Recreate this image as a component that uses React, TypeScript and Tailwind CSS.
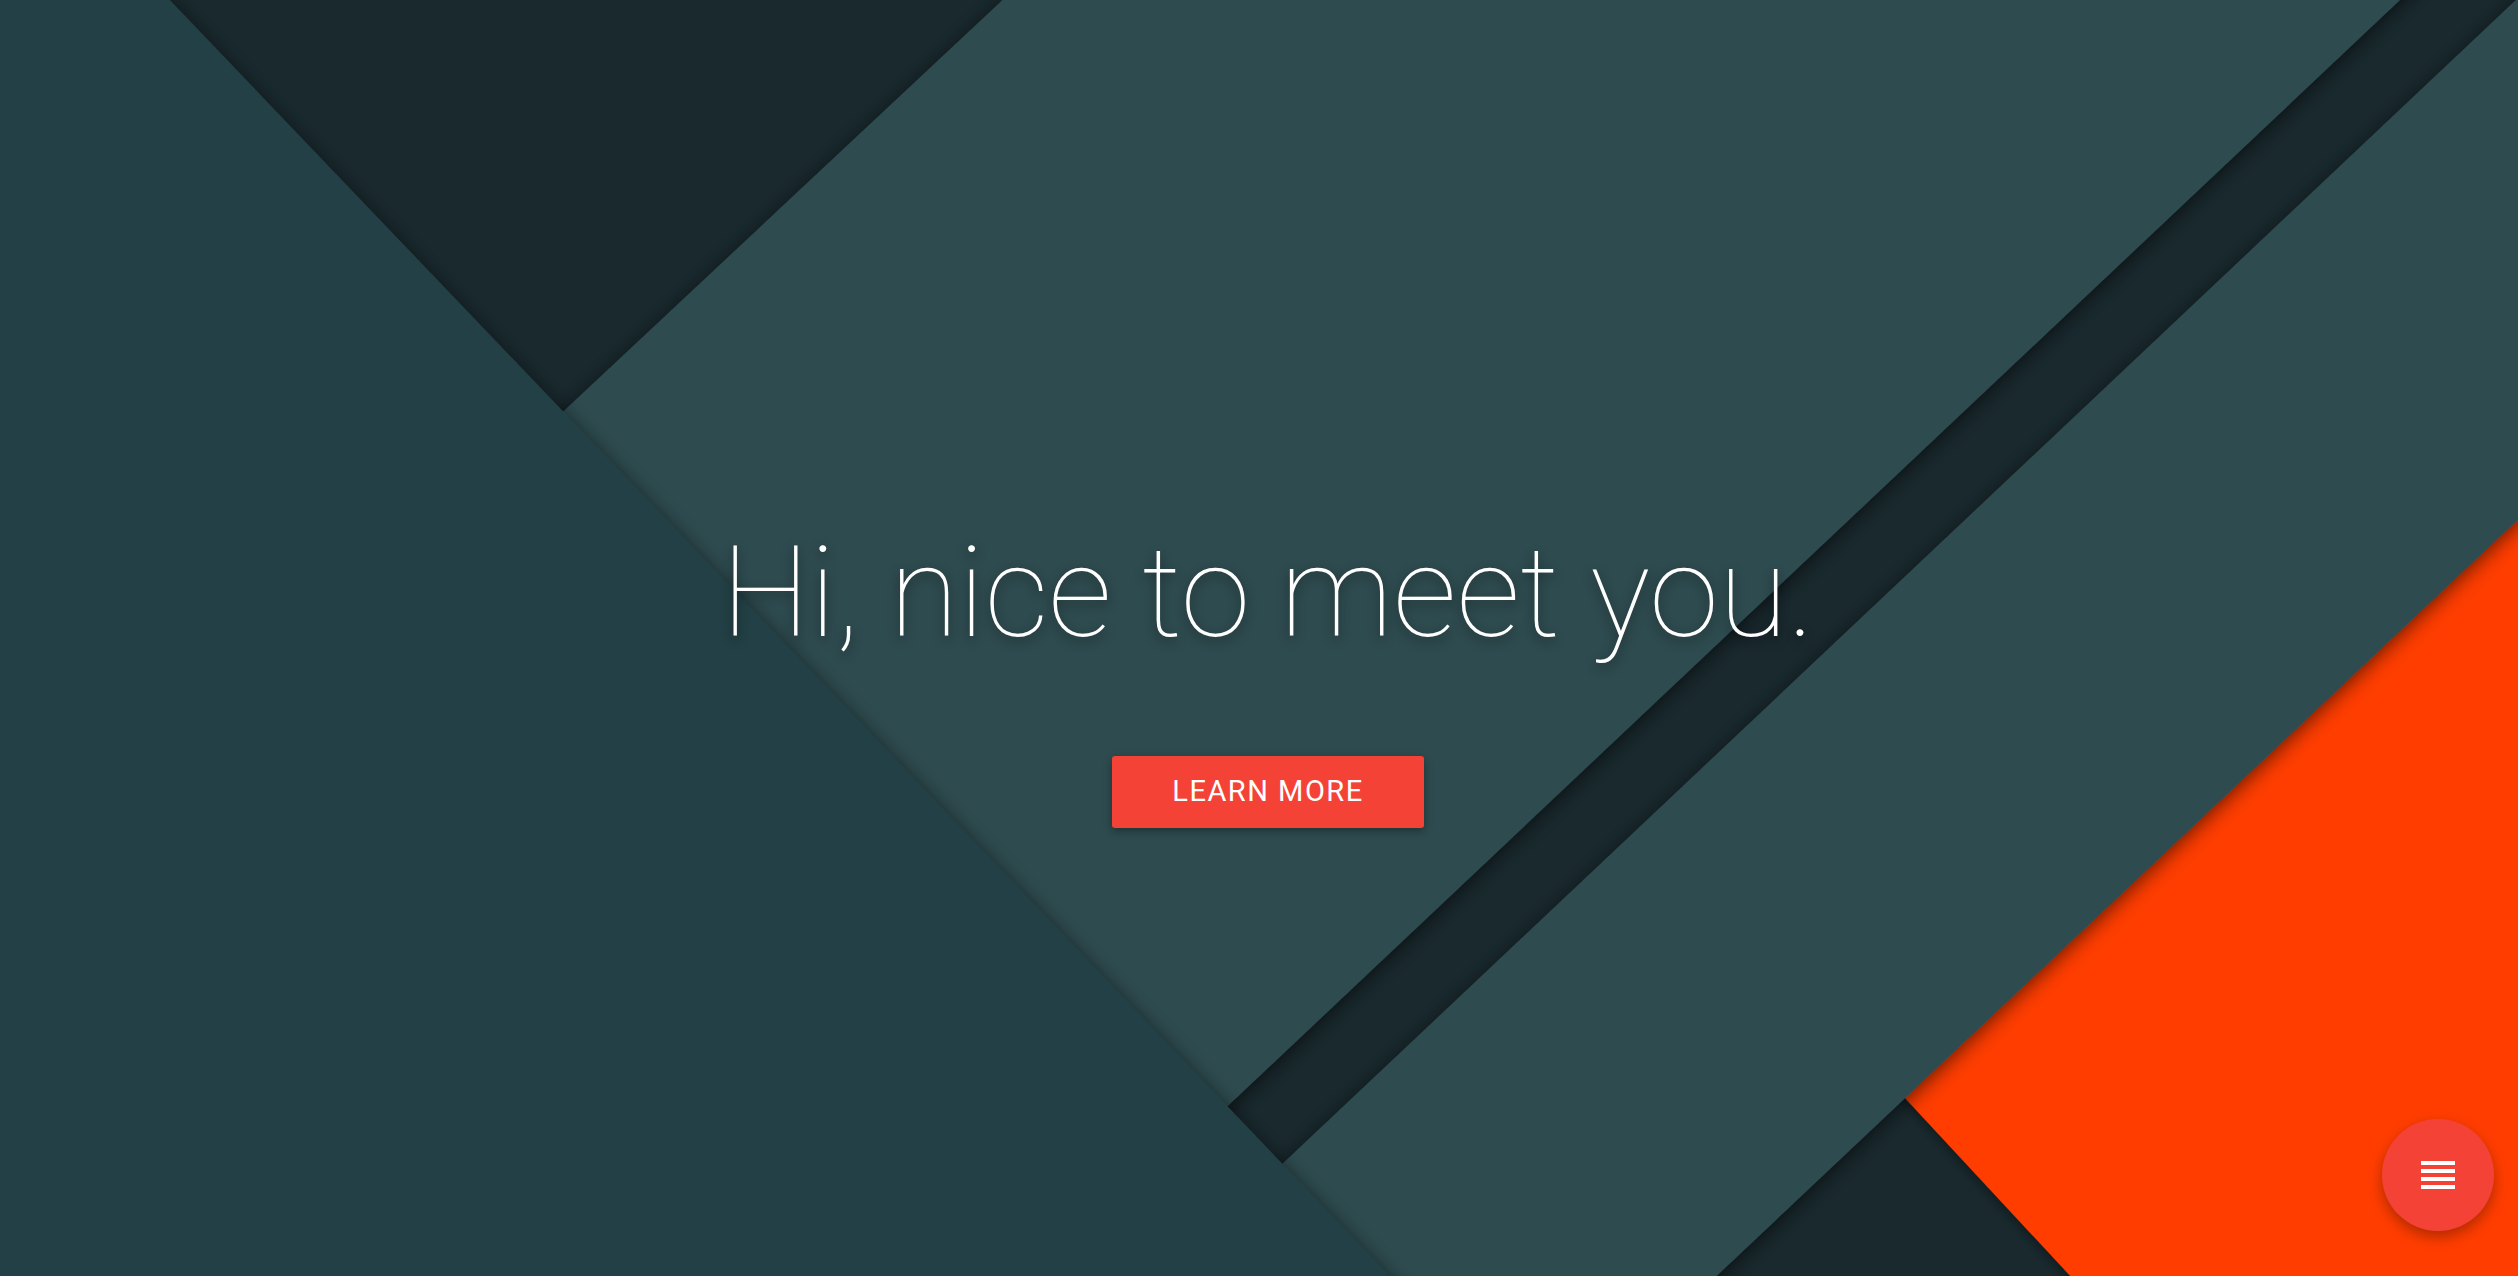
import React from "react";

// Material style backdrop: flat sheets stacked on a dark base
function Backdrop() {
  return (
    <svg
      className="absolute inset-0 h-full w-full"
      viewBox="0 0 2518 1276"
      preserveAspectRatio="none"
    >
      <defs>
        <filter id="sheet" x="-20%" y="-20%" width="140%" height="140%">
          <feDropShadow dx="0" dy="4" stdDeviation="10" floodColor="#000" floodOpacity="0.6" />
        </filter>
        <filter id="soft" x="-20%" y="-20%" width="140%" height="140%">
          <feDropShadow dx="0" dy="3" stdDeviation="6" floodColor="#000" floodOpacity="0.45" />
        </filter>
      </defs>

      <rect x="0" y="0" width="2518" height="1276" fill="#19292e" />

      {/* orange corner */}
      <polygon points="1721,900 2700,-100 2700,1336 2126,1336" fill="#ff3d00" filter="url(#soft)" />

      {/* teal sheets */}
      <g filter="url(#sheet)">
        <polygon points="1056,-50 2453,-50 984,1336 -424,1336" fill="#2e4c50" />
        <polygon points="2569,-50 3122,-50 1653,1336 1100,1336" fill="#2e4c50" />
      </g>

      {/* left sheet */}
      <polygon points="-50,-50 122,-50 1447,1336 -50,1336" fill="#223f44" filter="url(#sheet)" />
    </svg>
  );
}

export default function App(): React.ReactElement {
  return (
    <div className="relative h-screen w-full overflow-hidden bg-[#19292e] font-['Roboto',sans-serif]">
      <Backdrop />

      <div className="relative flex h-full flex-col items-center justify-center pt-[81px] pl-[18px]">
        <h1 className="text-[126px] font-thin leading-none text-white [text-shadow:0_4px_12px_rgba(0,0,0,0.45)]">
          Hi, nice to meet you.
        </h1>
        <button className="mt-[100px] flex h-[72px] w-[312px] items-center justify-center rounded-[3px] bg-[#f44336] text-[29px] font-normal tracking-[1.5px] text-white shadow-[0_3px_8px_rgba(0,0,0,0.35)]">
          LEARN MORE
        </button>
      </div>

      {/* floating menu button */}
      <button className="absolute right-[24px] bottom-[45px] flex h-[112px] w-[112px] items-center justify-center rounded-full bg-[#f44336] shadow-[0_6px_14px_rgba(0,0,0,0.3)]">
        <span className="flex w-[34px] flex-col gap-[4px]">
          <span className="h-[4px] bg-white" />
          <span className="h-[4px] bg-white" />
          <span className="h-[4px] bg-white" />
          <span className="h-[4px] bg-white" />
        </span>
      </button>
    </div>
  );
}
